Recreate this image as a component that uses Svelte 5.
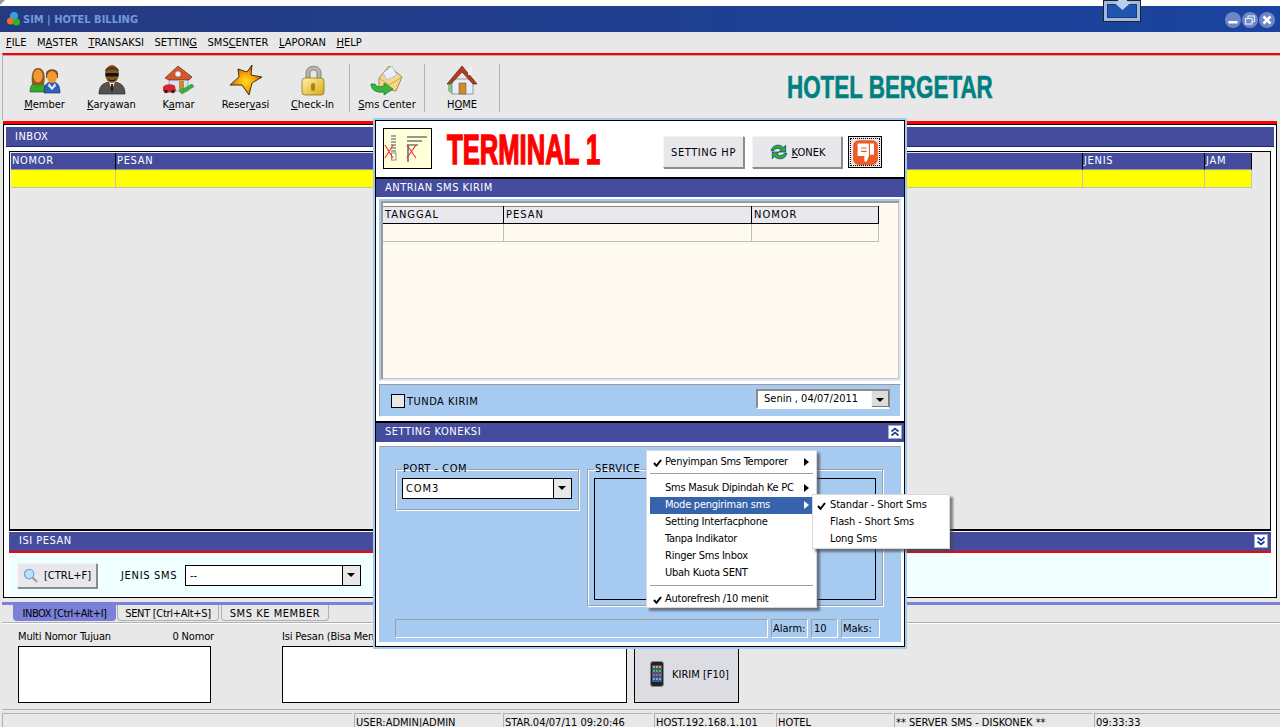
<script>
  const menus = [
    ['', 'F', 'ILE'], ['M', 'A', 'STER'], ['', 'T', 'RANSAKSI'], ['SETTIN', 'G', ''],
    ['SMS', 'C', 'ENTER'], ['', 'L', 'APORAN'], ['', 'H', 'ELP']
  ];
  const inboxCols = ['NOMOR', 'PESAN', 'JENIS', 'JAM'];
  const queueCols = ['TANGGAL', 'PESAN', 'NOMOR'];
  const statusCells = ['', 'USER:ADMIN|ADMIN', 'STAR.04/07/11 09:20:46', 'HOST.192.168.1.101', 'HOTEL', '** SERVER SMS - DISKONEK **', '09:33:33'];
</script>

{#snippet tick()}
  <svg class="tick" viewBox="0 0 9 8" width="9" height="8"><path d="M1 4l2.500 2.800L8 1" fill="none" stroke="currentColor" stroke-width="2" /></svg>
{/snippet}

<div class="screen">
  <div class="desk"></div>
  <header class="title">
    <svg class="logo" viewBox="0 0 16 16" width="16" height="16">
      <circle cx="8" cy="5" r="4" fill="#2f9fe8" />
      <circle cx="4.500" cy="10" r="3.500" fill="#e8701e" />
      <circle cx="10.500" cy="11" r="3.500" fill="#2ab52a" />
    </svg>
    <span class="title-text">SIM | HOTEL BILLING</span>
    <div class="win-btns">
      <span class="win"><svg viewBox="0 0 16 16"><rect x="3.500" y="9" width="9" height="2.500" fill="#fff" /></svg></span>
      <span class="win"><svg viewBox="0 0 16 16"><rect x="6" y="4" width="6.500" height="5.500" fill="none" stroke="#dfe6f5" stroke-width="1.200" /><rect x="3.500" y="6.500" width="6.500" height="5.500" fill="#7189c8" stroke="#dfe6f5" stroke-width="1.200" /></svg></span>
      <span class="win"><svg viewBox="0 0 16 16"><path d="M4.500 4.500l7 7M11.500 4.500l-7 7" stroke="#fff" stroke-width="2.600" /></svg></span>
    </div>
  </header>

  <nav class="menubar">
    {#each menus as m}
      <span>{m[0]}<u>{m[1]}</u>{m[2]}</span>
    {/each}
  </nav>

  <div class="toolbar">
    <button class="tool">
      <svg viewBox="0 0 36 32" width="36" height="32">
        <path d="M3 28c0-7 3-10 8-10s8 3 8 10z" fill="#2bb02b" stroke="#333" stroke-width=".6" />
        <path d="M17 29c0-7 2-11 8-11s8 4 8 11z" fill="#2a62c4" stroke="#223" stroke-width=".6" />
        <path d="M5 20c-1-8 0-16 6-16s8 7 6 16c-2 2-10 2-12 0z" fill="#8a5a28" />
        <ellipse cx="11" cy="12" rx="4.600" ry="6.500" fill="#f39a2e" />
        <path d="M19 9c1-5 11-5 12 0v5h-12z" fill="#7a4f24" />
        <ellipse cx="25" cy="13" rx="5" ry="6" fill="#f39a2e" />
        <path d="M22 19l3 4 3-4 1 3-4 4-4-4z" fill="#dfe9fb" />
      </svg>
      <span><u>M</u>ember</span>
    </button>
    <button class="tool">
      <svg viewBox="0 0 36 32" width="36" height="32">
        <path d="M5 30c0-8 4-12 13-12s13 4 13 12z" fill="#55534f" stroke="#222" stroke-width=".7" />
        <path d="M15 18l3 8 3-8z" fill="#e8e8e8" />
        <path d="M17.200 20h1.600l.6 6-1.400 2-1.400-2z" fill="#222" />
        <ellipse cx="18" cy="10" rx="7" ry="9" fill="#8a5526" />
        <path d="M11 7c1-6 13-6 14 0-4-1.500-10-1.500-14 0z" fill="#5d3818" />
        <rect x="11.500" y="9" width="13" height="3.400" rx="1.500" fill="#111" />
        <path d="M14 15.500c2 1.500 6 1.500 8 0" stroke="#231408" stroke-width="1" fill="none" />
      </svg>
      <span><u>K</u>aryawan</span>
    </button>
    <button class="tool">
      <svg viewBox="0 0 36 32" width="36" height="32">
        <path d="M8 13h19v14h-19z" fill="#d4e4f8" stroke="#6b7fa8" stroke-width=".6" />
        <path d="M4 14L17 2l14 11-3 3H8z" fill="#d2572a" stroke="#6b2c14" stroke-width=".7" />
        <circle cx="17" cy="10" r="2.800" fill="#eef5fd" stroke="#88a" stroke-width=".4" />
        <rect x="18" y="17" width="5" height="9" fill="#c48a2c" />
        <path d="M18 27l13-7 2 2.500-12 7.500z" fill="#33b23c" stroke="#1c6c22" stroke-width=".4" />
        <path d="M2 23c1-3 9-4 12-1l1 5c-3 2-10 2-13 0z" fill="#d8242c" />
        <circle cx="5" cy="27.500" r="1.800" fill="#222" /><circle cx="12" cy="27.500" r="1.800" fill="#222" />
      </svg>
      <span>K<u>a</u>mar</span>
    </button>
    <button class="tool">
      <svg viewBox="0 0 36 32" width="36" height="32">
        <defs><radialGradient id="st" cx=".5" cy=".55" r=".55"><stop offset="0" stop-color="#ffe020" /><stop offset=".55" stop-color="#f79a00" /><stop offset="1" stop-color="#b85000" /></radialGradient></defs>
        <path d="M24 1l-1 10 11 2-10 6-3 12-7-10-12 0 9-8-1-8 9 3z" fill="url(#st)" stroke="#2e2410" stroke-width=".9" stroke-linejoin="round" />
      </svg>
      <span>Reser<u>v</u>asi</span>
    </button>
    <button class="tool">
      <svg viewBox="0 0 36 32" width="36" height="32">
        <defs><linearGradient id="lk" x1="0" y1="0" x2="1" y2="1"><stop offset="0" stop-color="#fff4a0" /><stop offset="1" stop-color="#dba818" /></linearGradient></defs>
        <path d="M11 16v-7c0-9 15-9 15 0v7h-4v-7c0-4-7-4-7 0v7z" fill="#b9b6ae" stroke="#66645e" stroke-width=".7" />
        <rect x="7" y="14" width="22" height="17" rx="3" fill="url(#lk)" stroke="#7c6514" stroke-width=".7" />
        <rect x="16" y="19" width="4" height="8" rx="2" fill="#a9821a" />
      </svg>
      <span><u>C</u>heck-In</span>
    </button>
    <i class="sep"></i>
    <button class="tool wide">
      <svg viewBox="0 0 36 32" width="36" height="32">
        <path d="M10 14l10-12 13 11-6 14-17-3z" fill="#f3d68a" stroke="#7e6a2a" stroke-width=".7" />
        <path d="M14 9l9-7 5 9-10 5z" fill="#e6effb" stroke="#8aa0c8" stroke-width=".5" />
        <path d="M10 14l10 7 13-8" fill="none" stroke="#b59a45" stroke-width=".8" />
        <path d="M2 20c0 7 7 9 13 8l0 3 9-6-9-6v3c-4 1-8 1-9-2z" fill="#35b53b" stroke="#1f6a20" stroke-width=".7" />
      </svg>
      <span><u>S</u>ms Center</span>
    </button>
    <i class="sep"></i>
    <button class="tool wide">
      <svg viewBox="0 0 36 32" width="36" height="32">
        <path d="M8 15h21v15h-21z" fill="#e4eefb" stroke="#445" stroke-width=".5" />
        <path d="M3 20L18 2l15 18h-4L18 8 7 20z" fill="#b63a1c" stroke="#5c1a0c" stroke-width=".7" />
        <rect x="24" y="3" width="4" height="8" fill="#efefef" />
        <rect x="15" y="19" width="7" height="11" fill="#d28a2e" stroke="#7a4c14" stroke-width=".5" />
        <path d="M4 20l0 7 4 3v-13z" fill="#2f9a34" opacity=".5" />
      </svg>
      <span>H<u>O</u>ME</span>
    </button>
    <i class="sep"></i>
    <h1 class="brand">HOTEL BERGETAR</h1>
  </div>

  <section class="inbox">
    <div class="bar inbox-bar">INBOX</div>
    <div class="grid-box">
      <div class="grid-head">
        {#each inboxCols as c}<span>{c}</span>{/each}
      </div>
      <div class="grid-row">
        {#each inboxCols as c}<span></span>{/each}
      </div>
    </div>
    <div class="bar isi-bar">ISI PESAN
      <span class="chev"><svg viewBox="0 0 12 12"><path d="M2.500 2.500L6 5.500l3.500-3M2.500 6.500L6 9.500l3.500-3" fill="none" stroke="#1c3c9c" stroke-width="1.700" /></svg></span>
    </div>
    <div class="search-row">
      <button class="btn find">
        <svg viewBox="0 0 16 16" width="15" height="15">
          <path d="M10 10l5 5" stroke="#a0a0a0" stroke-width="2.400" />
          <circle cx="6.500" cy="6.500" r="5" fill="#bde0f8" stroke="#6aa8dc" stroke-width="1.300" />
        </svg>
        [CTRL+F]
      </button>
      <span class="jenis">JENIS SMS</span>
      <div class="combo jenis-combo"><span>--</span><b class="drop"></b></div>
    </div>
  </section>

  <div class="tabline"></div>
  <div class="tabs">
    <span class="tab active">INBOX [Ctrl+Alt+I]</span>
    <span class="tab t2">SENT [Ctrl+Alt+S]</span>
    <span class="tab t3">SMS KE MEMBER</span>
  </div>

  <section class="compose">
    <div class="field f1">
      <div class="lbl"><span>Multi Nomor Tujuan</span><span>0 Nomor</span></div>
      <div class="txt"></div>
    </div>
    <div class="field f2">
      <div class="lbl"><span>Isi Pesan (Bisa Men</span></div>
      <div class="txt"></div>
    </div>
    <button class="send">
      <svg viewBox="0 0 14 26" width="14" height="26">
        <rect x=".5" y=".5" width="13" height="25" rx="2.500" fill="#222" stroke="#8a8a8a" />
        <rect x="2" y="4" width="10" height="17" fill="#3a5a8a" />
        <path d="M3 5h2v2h-2zM6 5h2v2h-2zM9 5h2v2h-2z" fill="#e8a030" />
        <path d="M3 9h2v2h-2zM6 9h2v2h-2zM9 9h2v2h-2z" fill="#4fb84f" />
        <path d="M3 13h2v2h-2zM6 13h2v2h-2zM9 13h2v2h-2z" fill="#d85050" />
        <path d="M3 17h2v2h-2zM6 17h2v2h-2zM9 17h2v2h-2z" fill="#58b8e8" />
      </svg>
      KIRIM [F10]
    </button>
  </section>

  <footer class="status">
    {#each statusCells as s}<span>{s}</span>{/each}
  </footer>

  <div class="deco">
    <svg viewBox="0 0 38 22" width="38" height="22"><path d="M15 0h9v2h4.500l-9 8-9-8h4.500z" fill="#b8d0ee" /></svg>
  </div>

  <div class="dialog">
    <div class="dlg-head">
      <div class="ledger">
        <svg viewBox="0 0 47 39" width="47" height="39">
          <path d="M7 7h5M7 10h5M7 13h5M7 16h5M7 19h5M7 22h5" stroke="#8a8a8a" stroke-width="1.300" />
          <rect x="7.500" y="24" width="4.500" height="7" fill="none" stroke="#8a8a8a" />
          <path d="M23 8h20M23 12h15M23 16h11M24 16v17" stroke="#777" stroke-width="1.700" />
          <path d="M1 16l8 13M9 16l-8 13M23 16l9 13M32 16l-9 13" stroke="#e83030" stroke-width="1.100" />
        </svg>
      </div>
      <div class="terminal-box"><span class="terminal">TERMINAL 1</span></div>
      <button class="btn hp">SETTING HP</button>
      <button class="btn konek">
        <svg viewBox="0 0 18 18" width="20" height="20">
          <path d="M2 8c.5-5 7-7 11-3l2-2v6h-6l2-2c-3-2-6-1-7 1z" fill="#2bb02b" stroke="#123a8c" stroke-width=".7" />
          <path d="M16 10c-.5 5-7 7-11 3l-2 2v-6h6l-2 2c3 2 6 1 7-1z" fill="#2bb02b" stroke="#123a8c" stroke-width=".7" />
        </svg>
        <span><u>K</u>ONEK</span>
      </button>
      <button class="thumb">
        <svg viewBox="0 0 24 24" width="27" height="27">
          <rect x="1" y="1" width="22" height="22" rx="5" fill="#ee5a24" />
          <path d="M5 4h10v11l-2 5h-2v-5H5z" fill="#fff" />
          <path d="M8 8h5M8 11h5" stroke="#ee5a24" stroke-width="1" />
          <rect x="16" y="4" width="3.500" height="10" fill="#fff" />
        </svg>
      </button>
    </div>

    <div class="bar dlg-bar">ANTRIAN SMS KIRIM</div>
    <div class="queue">
      <div class="q-head">{#each queueCols as c}<span>{c}</span>{/each}</div>
      <div class="q-row">{#each queueCols as c}<span></span>{/each}</div>
    </div>
    <div class="tunda">
      <i class="check"></i>
      <span class="tunda-text">TUNDA KIRIM</span>
      <div class="date"><span>Senin , 04/07/2011</span><b class="drop"></b></div>
    </div>

    <div class="bar dlg-bar second">SETTING KONEKSI
      <span class="chev"><svg viewBox="0 0 12 12"><path d="M2.500 5.500L6 2.500l3.500 3M2.500 9.500L6 6.500l3.500 3" fill="none" stroke="#1c3c9c" stroke-width="1.700" /></svg></span>
    </div>
    <div class="conn">
      <div class="groups">
        <fieldset class="port">
          <legend>PORT - COM</legend>
          <div class="combo"><span>COM3</span><b class="drop"></b></div>
        </fieldset>
        <fieldset class="service">
          <legend>SERVICE</legend>
          <div class="svc-box"></div>
        </fieldset>
      </div>
      <div class="conn-status">
        <span class="cs grow"></span>
        <span class="cs alarm">Alarm:</span>
        <span class="cs val">10</span>
        <span class="cs maks">Maks:</span>
      </div>
    </div>
  </div>

  <div class="menu main-menu">
    <div class="item">{@render tick()}Penyimpan Sms Temporer<b class="arrow"></b></div>
    <hr />
    <div class="item">Sms Masuk Dipindah Ke PC<b class="arrow"></b></div>
    <div class="item on">Mode pengiriman sms<b class="arrow"></b></div>
    <div class="item">Setting Interfacphone</div>
    <div class="item">Tanpa Indikator</div>
    <div class="item">Ringer Sms Inbox</div>
    <div class="item">Ubah Kuota SENT</div>
    <hr />
    <div class="item">{@render tick()}Autorefresh /10 menit</div>
  </div>
  <div class="menu sub-menu">
    <div class="item">{@render tick()}Standar - Short Sms</div>
    <div class="item">Flash - Short Sms</div>
    <div class="item">Long Sms</div>
  </div>
</div>

<style>
  :global(body) {
    margin: 0;
    background: #e8e8e8;
  }
  .screen {
    position: relative;
    width: 1280px;
    height: 727px;
    overflow: hidden;
    background: #e8e8e8;
    font: 11px "DejaVu Sans Condensed", "Liberation Sans", Arial, sans-serif;
    font-stretch: condensed;
    color: #000;
  }
  button {
    font: inherit;
    color: inherit;
    padding: 0;
  }
  .desk {
    height: 6px;
    background: linear-gradient(135deg, #999 0 3px, #fff 4px);
  }
  .title {
    height: 26px;
    display: flex;
    align-items: center;
    padding: 0 5px 0 6px;
    background: linear-gradient(90deg, #263a80, #1a44a0);
  }
  .logo {
    margin-right: 1px;
  }
  .title-text {
    font-weight: bold;
    color: #6f9bd8;
  }
  .win-btns {
    margin-left: auto;
    display: flex;
    gap: 1px;
    padding-top: 2px;
  }
  .win {
    width: 16px;
    height: 16px;
    border-radius: 50%;
    background: #6f86c6;
    display: block;
  }
  .win svg {
    display: block;
  }
  .menubar {
    height: 21px;
    display: flex;
    align-items: center;
    padding-left: 6px;
    gap: 10.600px;
  }
  .toolbar {
    margin-left: 2px;
    height: 65px;
    border-top: 2px solid #f00;
    border-left: 1px solid #b0b0b0;
    box-shadow: inset 0 1px 0 #b0b0b0;
    display: flex;
    align-items: center;
    padding-left: 8px;
  }
  .tool {
    width: 67px;
    height: 52px;
    margin-top: 4px;
    background: none;
    border: 0;
    display: flex;
    flex-direction: column;
    align-items: center;
    gap: 2px;
    white-space: nowrap;
  }
  .tool.wide {
    width: 68px;
  }
  .tool svg {
    display: block;
  }
  .sep {
    width: 1px;
    height: 48px;
    background: #b0b0b0;
    margin: 0 3px;
    flex: none;
  }
  .brand {
    margin: 0 0 0 284px;
    color: #008080;
    font: bold 32px "Liberation Sans", sans-serif;
    white-space: nowrap;
    -webkit-text-stroke: .6px #008080;
    transform: scaleX(.7);
    transform-origin: left center;
  }
  .inbox {
    margin: 4px 3px 0;
    height: 474px;
    border: 1px solid #000;
    background: #fff;
    box-shadow: 0 -3px 0 #f00;
    padding: 2px 2px 0;
    box-sizing: border-box;
  }
  .bar {
    background: #454b9d;
    color: #fff;
    height: 19px;
    line-height: 19px;
    padding-left: 9px;
    position: relative;
    letter-spacing: .5px;
  }
  .inbox-bar {
    border-bottom: 1px solid #23265e;
  }
  .grid-box {
    margin: 4px 3px 0;
    height: 375px;
    border: 1px solid #000;
    background: #e8e8e8;
    padding: 1px;
    border-bottom-width: 2px;
  }
  .grid-head, .grid-row {
    display: grid;
    grid-template-columns: 105px 967px 122px 47px;
    width: 1241px;
  }
  .grid-head span {
    background: #454b9d;
    color: #fff;
    height: 17px;
    line-height: 16px;
    padding-left: 1px;
    border-right: 1px solid #000;
    border-bottom: 1px solid #9a9a9a;
    box-sizing: border-box;
    letter-spacing: .7px;
  }
  .grid-row span {
    background: #ff0;
    height: 18px;
    border-right: 1px solid #c0c0c0;
    border-bottom: 1px solid #c0c0c0;
    box-sizing: border-box;
  }
  .isi-bar {
    margin: 1px 3px 0;
    height: 21px;
    border-bottom: 2px solid #f00;
    box-sizing: border-box;
    padding-left: 10px;
    line-height: 18px;
  }
  .chev {
    position: absolute;
    width: 12px;
    height: 12px;
    background: #fff;
    right: 4px;
    top: 3px;
    box-shadow: 0 0 0 1px #9ab;
  }
  .chev svg {
    display: block;
  }
  .search-row {
    margin: 0 3px;
    height: 43px;
    background: #f0ffff;
    display: flex;
    align-items: center;
    padding: 2px 0 0 8px;
    box-sizing: border-box;
  }
  .btn {
    background: #e8e8ec;
    border: 1px solid;
    border-color: #f4f4f4 #8c8c8c #8c8c8c #f4f4f4;
    box-shadow: 1px 1px 0 #8c8c8c;
    display: flex;
    align-items: center;
    justify-content: center;
  }
  .find {
    width: 80px;
    height: 25px;
    gap: 6px;
  }
  .jenis {
    margin-left: 24px;
    width: 64px;
    letter-spacing: .7px;
  }
  .combo {
    display: flex;
    align-items: center;
    border: 1px solid #000;
    background: #fff;
    height: 19px;
    padding-left: 3px;
    position: relative;
  }
  .port .combo span {
    letter-spacing: .9px;
  }
  .jenis-combo {
    width: 170px;
    padding-left: 4px;
  }
  .drop {
    position: absolute;
    right: 0;
    top: 0;
    bottom: 0;
    width: 17px;
    background: #e8e8e8;
    border-left: 1px solid #000;
  }
  .drop::after {
    content: "";
    position: absolute;
    left: 4px;
    top: 7px;
    border: 4px solid transparent;
    border-top: 4px solid #000;
    border-bottom: 0;
  }
  .tabline {
    height: 3px;
    margin: 4px 0 0 2px;
    background: #7b80d8;
  }
  .tabs {
    display: flex;
    height: 17px;
    margin-left: 13px;
    gap: 1px;
  }
  .tab {
    display: block;
    box-sizing: border-box;
    height: 16px;
    width: 102px;
    line-height: 17px;
    text-align: center;
    border: 1px solid #b0b0b0;
    border-top: 0;
    border-radius: 0 0 4px 4px;
    white-space: nowrap;
    letter-spacing: -.3px;
  }
  .tab.active {
    background: #7b80d8;
    border-color: #7b80d8;
    width: 103px;
    letter-spacing: -.45px;
  }
  .tab.t3 {
    width: 108px;
    margin-left: 1px;
    letter-spacing: .55px;
  }
  .compose {
    margin-left: 2px;
    height: 88px;
    box-sizing: border-box;
    border-top: 1px solid #b0b0b0;
    border-bottom: 1px solid #b0b0b0;
    box-shadow: inset 0 1px 0 #fff;
    display: flex;
    align-items: flex-start;
    padding: 8px 0 0 16px;
  }
  .field {
    flex: none;
  }
  .f1 {
    width: 193px;
  }
  .f2 {
    width: 345px;
    margin-left: 71px;
  }
  .lbl {
    display: flex;
    justify-content: space-between;
    height: 15px;
    line-height: 11px;
    white-space: nowrap;
    margin-right: -3px;
    letter-spacing: -.15px;
  }
  .txt {
    height: 55px;
    background: #fff;
    border: 1px solid #000;
  }
  .send {
    margin: 15px 0 0 7px;
    width: 105px;
    height: 57px;
    flex: none;
    background: #dcdde3;
    border: 1px solid #000;
    border-top: 0;
    display: flex;
    align-items: center;
    gap: 8px;
    padding-left: 15px;
    box-sizing: border-box;
  }
  .status {
    margin-top: 3px;
    display: flex;
    gap: 2px;
    margin-left: 2px;
    height: 14px;
  }
  .status span {
    box-sizing: border-box;
    border-top: 1px solid #b0b0b0;
    border-left: 1px solid #b0b0b0;
    padding: 4px 0 0 1px;
    line-height: 9px;
    white-space: nowrap;
  }
  .status span:nth-child(1) { width: 350px; }
  .status span:nth-child(2) { width: 147px; }
  .status span:nth-child(3) { width: 149px; }
  .status span:nth-child(4) { width: 120px; }
  .status span:nth-child(5) { width: 116px; }
  .status span:nth-child(6) { width: 198px; }
  .status span:nth-child(7) { flex: 1; }

  .deco {
    position: absolute;
    left: 1103px;
    top: 0;
    width: 38px;
    height: 22px;
    box-sizing: border-box;
    background: #1e56b0;
    box-shadow: inset 0 0 0 4px #9fb9df, inset 0 0 0 5px #1a3a80;
    outline: 1px solid #222;
    outline-offset: -1px;
  }
  .deco svg {
    position: absolute;
    left: 0;
    top: 0;
  }

  .dialog {
    position: absolute;
    left: 375px;
    top: 120px;
    width: 530px;
    height: 527px;
    box-sizing: border-box;
    border: 1px solid #000;
    outline: 2px solid #a6caf0;
    background: #fff;
    display: flex;
    flex-direction: column;
  }
  .dlg-head {
    flex: none;
    display: flex;
    align-items: center;
    padding-left: 7px;
    border-bottom: 2px solid #000;
    box-sizing: border-box;
    height: 58px;
  }
  .ledger {
    width: 47px;
    height: 39px;
    background: #ffffd8;
    border: 1px solid #000;
    margin-top: -2px;
    flex: none;
  }
  .ledger svg {
    display: block;
  }
  .terminal-box {
    margin-left: 15px;
    width: 216px;
    flex: none;
    height: 44px;
  }
  .terminal {
    display: block;
    color: #f00;
    font: bold 42px/46px "Liberation Sans", sans-serif;
    -webkit-text-stroke: 1.500px #f00;
    white-space: nowrap;
    transform: scaleX(.61);
    transform-origin: left center;
  }
  .hp {
    width: 81px;
    height: 32px;
    margin-top: 6px;
    flex: none;
    letter-spacing: .6px;
  }
  .konek {
    width: 90px;
    height: 32px;
    margin: 6px 0 0 8px;
    gap: 3px;
    flex: none;
  }
  .thumb {
    width: 34px;
    height: 32px;
    margin: 6px 0 0 6px;
    border: 1px solid #000;
    background: #e8e8ec;
    outline: 1px dotted #000;
    outline-offset: -3px;
    display: flex;
    align-items: center;
    justify-content: center;
    flex: none;
  }
  .dlg-bar {
    flex: none;
    height: 18px;
    line-height: 17px;
    margin-bottom: 1px;
  }
  .queue {
    flex: none;
    height: 182px;
    margin: 1px 3px 0 3px;
    box-sizing: border-box;
    background: #fffaf0;
    border: 2px solid;
    border-color: #a6caf0 #dfe8f2 #dfe8f2 #a6caf0;
    box-shadow: inset 2px 2px 0 #9a9a9a, inset -1px -1px 0 #c4c4c4;
    padding: 5px 0 0 2px;
  }
  .q-head, .q-row {
    display: grid;
    grid-template-columns: 121px 248px 127px;
    width: 496px;
  }
  .q-head span {
    background: #e8e8ee;
    height: 18px;
    line-height: 17px;
    padding-left: 2px;
    box-sizing: border-box;
    border: solid #000;
    border-width: 0 1px 1px 0;
    box-shadow: inset 0 1px 0 #888;
    letter-spacing: 1px;
  }
  .q-row span {
    height: 18px;
    box-sizing: border-box;
    border: solid #c0c0c0;
    border-width: 0 1px 1px 0;
  }
  .tunda {
    flex: none;
    height: 33px;
    margin: 3px 3px 0;
    background: #a6caf0;
    box-sizing: border-box;
    border: 1px solid;
    border-color: #9a9a9a #fff #fff #9a9a9a;
    display: flex;
    align-items: center;
    padding-left: 11px;
  }
  .check {
    width: 12px;
    height: 12px;
    border: 1px solid #000;
    background: #e8e8e8;
    margin-top: 1px;
  }
  .tunda-text {
    margin-left: 2px;
    margin-top: 1px;
    letter-spacing: .5px;
  }
  .date {
    margin-left: auto;
    margin-right: 10px;
    width: 134px;
    height: 20px;
    box-sizing: border-box;
    border: 2px solid #8c8c8c;
    border-right-width: 1px;
    border-bottom-color: #fff;
    background: #fff;
    position: relative;
    padding-left: 6px;
    line-height: 16px;
    top: -2px;
  }
  .date .drop {
    border-left: 1px solid #f4f4f4;
    right: 0;
    background: #dcdcdc;
    box-shadow: inset -1px -1px 0 #777;
  }
  .second {
    margin-top: 4px;
    border-top: 2px solid #000;
    height: 21px;
    box-sizing: border-box;
    padding-top: 1px;
    line-height: 15px;
    margin-bottom: 0;
  }
  .second .chev {
    top: 3px;
    right: 3px;
  }
  .conn {
    flex: 1;
    margin: 4px 3px 4px;
    background: #a6caf0;
    border-top: 1px solid #a0a0a0;
    border-left: 1px solid #b8c8d8;
    padding: 17px 16px 0 15px;
    display: flex;
    flex-direction: column;
    min-height: 0;
  }
  .groups {
    display: flex;
    align-items: flex-start;
    gap: 8px;
    height: 155px;
  }
  fieldset {
    margin: 0;
    padding: 0 6px;
    border: 1px solid #a0a0a0;
    box-shadow: 1px 1px 0 #fff, inset 1px 1px 0 #fff;
    box-sizing: border-box;
    min-width: 0;
  }
  legend {
    padding: 0 1px;
    margin-left: 0;
    line-height: 10px;
    height: 10px;
    letter-spacing: .5px;
  }
  .port {
    width: 184px;
    height: 46px;
  }
  .port .combo {
    margin-top: 4px;
  }
  .service {
    width: 296px;
    height: 142px;
  }
  .svc-box {
    margin-top: 4px;
    height: 120px;
    border: 1px solid #000;
  }
  .conn-status {
    display: flex;
    gap: 3px;
    height: 19px;
  }
  .cs {
    box-sizing: border-box;
    border: 1px solid;
    border-color: #a0a0a0 #fff #fff #a0a0a0;
    line-height: 17px;
    padding-left: 1px;
    white-space: nowrap;
  }
  .grow { width: 373px; }
  .alarm { width: 37px; }
  .val { width: 27px; padding-left: 2px; }
  .maks { width: 39px; }

  .menu {
    position: absolute;
    background: #fff;
    border: 1px solid #d8d8d8;
    box-shadow: inset 0 0 0 1px #fff, 3px 3px 2px rgba(70, 70, 80, .65);
    padding: 3px 3px 2px;
    box-sizing: border-box;
    letter-spacing: -.25px;
  }
  .main-menu {
    left: 646px;
    top: 450px;
    width: 171px;
    height: 158px;
  }
  .sub-menu {
    left: 812px;
    top: 494px;
    width: 138px;
    height: 55px;
    padding-top: 2px;
    letter-spacing: -.15px;
  }
  .item {
    position: relative;
    height: 17px;
    line-height: 16px;
    padding-left: 15px;
    white-space: nowrap;
  }
  .sub-menu .item {
    padding-left: 14px;
  }
  .item.on {
    background: #3663ab;
    color: #fff;
  }
  .menu hr {
    border: 0;
    height: 1px;
    background: #a0a0a0;
    margin: 2px 0 6px;
  }
  .main-menu hr:last-of-type {
    margin: 3px 0 5px;
  }
  .tick {
    position: absolute;
    left: 3px;
    top: 5px;
  }
  .sub-menu .tick {
    left: 1px;
  }
  .arrow {
    position: absolute;
    right: 4px;
    top: 4px;
    border: 4px solid transparent;
    border-left: 5px solid #000;
    border-right: 0;
  }
  .on .arrow {
    border-left-color: #fff;
  }
</style>
